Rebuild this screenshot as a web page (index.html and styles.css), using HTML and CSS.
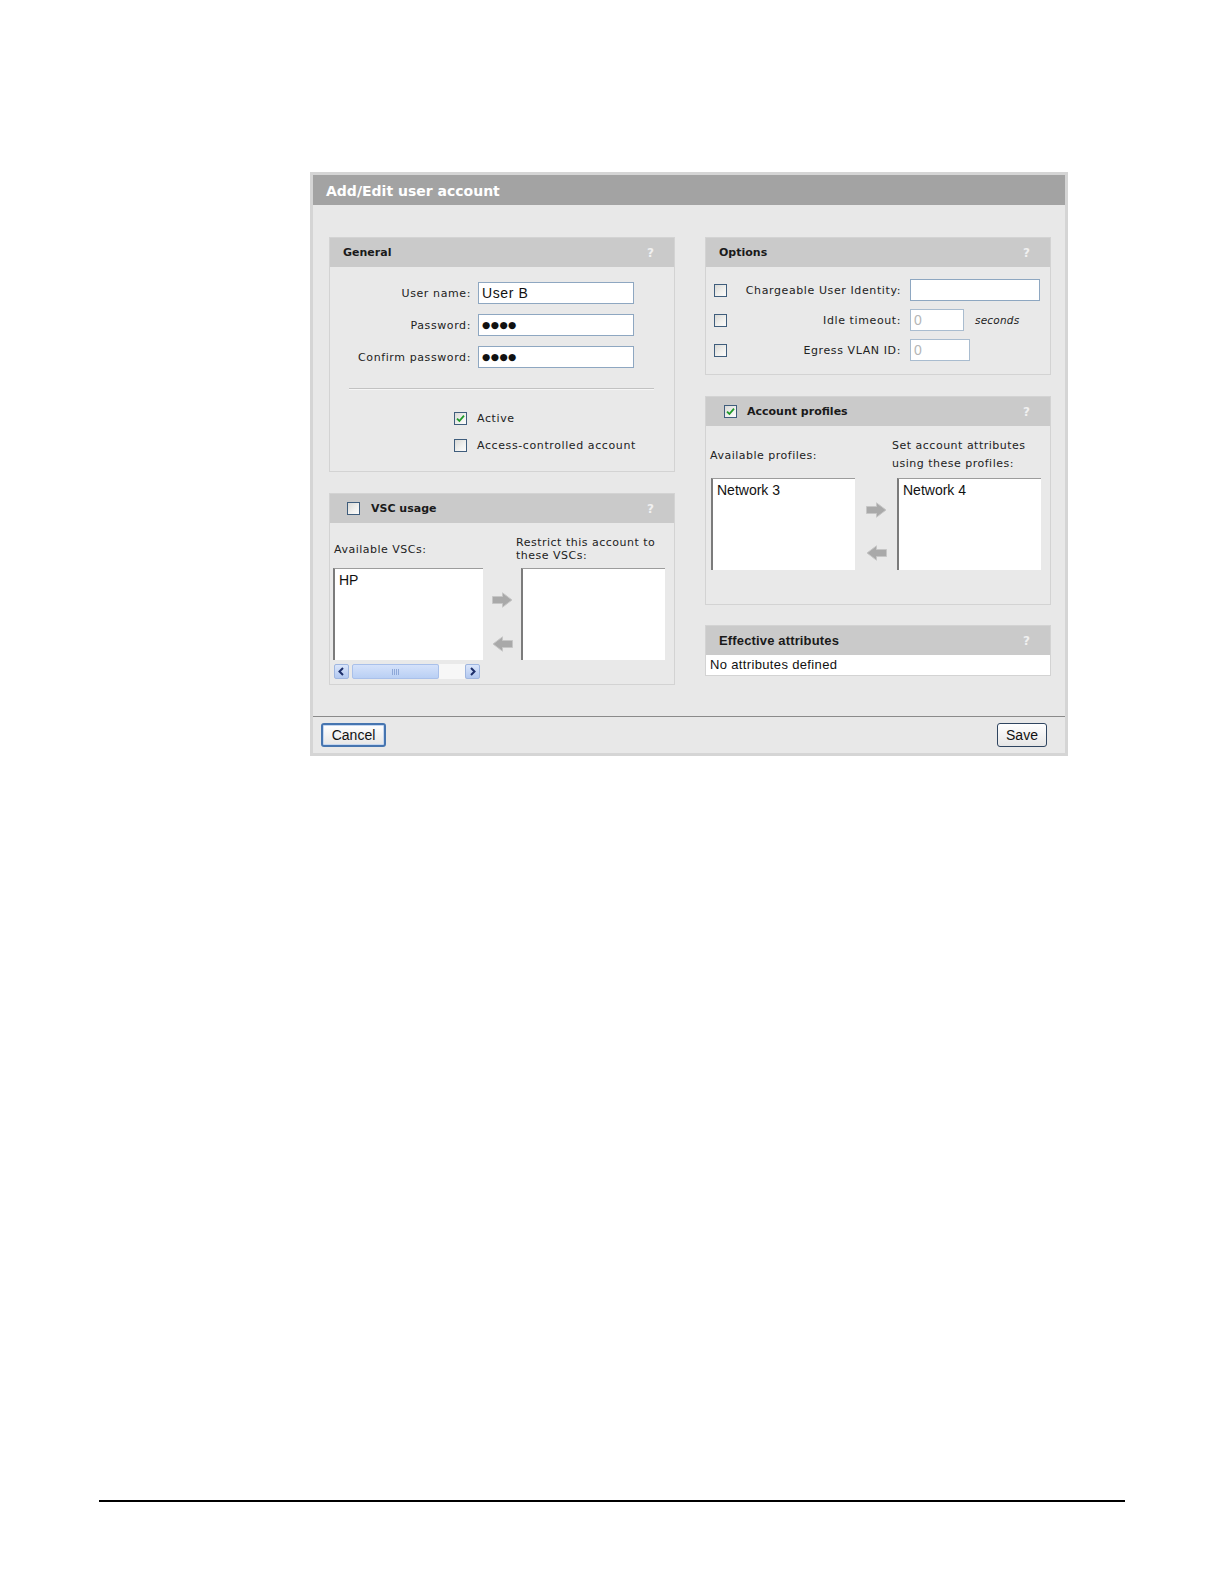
FILE: index.html
```html
<!DOCTYPE html>
<html lang="en">
<head>
<meta charset="utf-8">
<title>Add/Edit user account</title>
<link rel="stylesheet" href="styles.css">
</head>
<body>
<div class="page">
  <div class="frame">
    <div class="titlebar">Add/Edit user account</div>
    <div class="content">
      <div class="col">
        <div class="panel general">
          <div class="panel-head"><span>General</span><span class="help">?</span></div>
          <div class="general-body">
            <div class="fields">
              <label class="flabel">User name:</label>
              <div class="input text">User B</div>
              <label class="flabel">Password:</label>
              <div class="input pwd">●●●●</div>
              <label class="flabel">Confirm password:</label>
              <div class="input pwd">●●●●</div>
            </div>
            <div class="sep"></div>
            <div class="checks">
              <div class="check-row"><span class="cb checked"><svg viewBox="0 0 11 11" width="11" height="11"><path d="M2 5.6 L4.4 8 L9 2.6" fill="none" stroke="#1f9a2a" stroke-width="1.8"/></svg></span><span>Active</span></div>
              <div class="check-row"><span class="cb"></span><span>Access-controlled account</span></div>
            </div>
          </div>
        </div>

        <div class="panel vsc">
          <div class="panel-head"><span class="head-title"><span class="cb"></span><span>VSC usage</span></span><span class="help">?</span></div>
          <div class="vsc-body">
            <div class="lbl lbl-left">Available VSCs:</div>
            <div class="lbl lbl-right tight">Restrict this account to<br>these VSCs:</div>
            <div class="left-stack">
              <div class="listbox"><div class="item">HP</div></div>
              <div class="scrollbar">
                <span class="sb-btn"><svg viewBox="0 0 13 13" width="13" height="13"><path d="M8 3 L4.5 6.5 L8 10" fill="none" stroke="#1d2f6b" stroke-width="2"/></svg></span>
                <span class="sb-thumb"><span class="grip"></span></span>
                <span class="sb-track"></span>
                <span class="sb-btn"><svg viewBox="0 0 13 13" width="13" height="13"><path d="M5 3 L8.5 6.5 L5 10" fill="none" stroke="#1d2f6b" stroke-width="2"/></svg></span>
              </div>
            </div>
            <div class="arrows">
              <svg class="arrow" viewBox="0 0 21 16" width="21" height="16"><path d="M0.5 4.5 H10.5 V0.8 L20 8 L10.5 15.2 V11.5 H0.5 Z" fill="#a9a9a9" stroke="#c6c6c6" stroke-width="1"/></svg>
              <svg class="arrow" viewBox="0 0 21 16" width="21" height="16"><path d="M20.5 4.5 H10.5 V0.8 L1 8 L10.5 15.2 V11.5 H20.5 Z" fill="#a9a9a9" stroke="#c6c6c6" stroke-width="1"/></svg>
            </div>
            <div class="listbox"></div>
          </div>
        </div>
      </div>

      <div class="col right">
        <div class="panel options">
          <div class="panel-head"><span>Options</span><span class="help">?</span></div>
          <div class="options-body">
            <div class="opt-row">
              <span class="cb"></span>
              <label class="olabel">Chargeable User Identity:</label>
              <div class="field"><div class="input w-cui"></div></div>
            </div>
            <div class="opt-row">
              <span class="cb"></span>
              <label class="olabel">Idle timeout:</label>
              <div class="field"><div class="input disabled w-idle">0</div><span class="suffix">seconds</span></div>
            </div>
            <div class="opt-row">
              <span class="cb"></span>
              <label class="olabel">Egress VLAN ID:</label>
              <div class="field"><div class="input disabled w-vlan">0</div></div>
            </div>
          </div>
        </div>

        <div class="panel profiles">
          <div class="panel-head"><span class="head-title"><span class="cb checked"><svg viewBox="0 0 11 11" width="11" height="11"><path d="M2 5.6 L4.4 8 L9 2.6" fill="none" stroke="#1f9a2a" stroke-width="1.8"/></svg></span><span>Account profiles</span></span><span class="help">?</span></div>
          <div class="profiles-body">
            <div class="lbl lbl-left">Available profiles:</div>
            <div class="lbl lbl-right loose">Set account attributes<br>using these profiles:</div>
            <div class="listbox"><div class="item">Network 3</div></div>
            <div class="arrows tight-gap">
              <svg class="arrow" viewBox="0 0 21 16" width="21" height="16"><path d="M0.5 4.5 H10.5 V0.8 L20 8 L10.5 15.2 V11.5 H0.5 Z" fill="#a9a9a9" stroke="#c6c6c6" stroke-width="1"/></svg>
              <svg class="arrow" viewBox="0 0 21 16" width="21" height="16"><path d="M20.5 4.5 H10.5 V0.8 L1 8 L10.5 15.2 V11.5 H20.5 Z" fill="#a9a9a9" stroke="#c6c6c6" stroke-width="1"/></svg>
            </div>
            <div class="listbox"><div class="item">Network 4</div></div>
          </div>
        </div>

        <div class="panel effective">
          <div class="panel-head alt"><span>Effective attributes</span><span class="help">?</span></div>
          <div class="effective-body">No attributes defined</div>
        </div>
      </div>
    </div>
    <div class="footer">
      <button class="btn cancel" type="button">Cancel</button>
      <button class="btn save" type="button">Save</button>
    </div>
  </div>
</div>
<div class="rule"></div>
</body>
</html>
```

FILE: styles.css
```css
* { box-sizing: border-box; }

html, body {
  margin: 0;
  padding: 0;
  background: #ffffff;
}

body {
  width: 1224px;
  height: 1584px;
  font-family: "DejaVu Sans", Verdana, sans-serif;
  color: #222222;
}

.page {
  padding: 172px 0 0 310px;
}

.frame {
  width: 758px;
  border: 3px solid #d5d5d5;
  background: #e8e8e8;
}

.titlebar {
  height: 30px;
  background: #a3a3a3;
  color: #ffffff;
  font-weight: bold;
  font-size: 14px;
  line-height: 32px;
  padding-left: 13px;
  overflow: hidden;
}

.content {
  display: grid;
  grid-template-columns: 346px 346px;
  column-gap: 30px;
  align-items: start;
  padding: 32px 14px 31px 16px;
}

.col {
  display: flex;
  flex-direction: column;
  gap: 21px;
}

.col.right .effective {
  margin-top: -1px;
}

.panel {
  border: 1px solid #d3d3d3;
  background: #e9e9e9;
}

.panel-head {
  height: 29px;
  background: #cacaca;
  display: flex;
  align-items: center;
  justify-content: space-between;
  padding: 0 20px 0 13px;
  font-weight: bold;
  font-size: 11px;
  color: #1a1a1a;
}

.panel-head.alt {
  font-family: "Liberation Sans", Arial, sans-serif;
  font-size: 13px;
  letter-spacing: 0.15px;
}

.head-title {
  display: flex;
  align-items: center;
  gap: 11px;
}

.vsc .head-title { margin-left: 4px; }
.profiles .head-title { margin-left: 5px; gap: 10px; }

.help {
  color: #f0f0f0;
  font-size: 12px;
  font-family: "DejaVu Sans", sans-serif;
}

/* checkbox */
.cb {
  width: 13px;
  height: 13px;
  flex: 0 0 13px;
  border: 1px solid #3f5d7c;
  background: linear-gradient(135deg, #d9d9d6 0%, #f1f1ef 60%, #fbfbfb 100%);
  display: inline-flex;
  align-items: center;
  justify-content: center;
}

/* inputs */
.input {
  height: 22px;
  border: 1px solid #8ea7c1;
  background: #ffffff;
  font-family: "Liberation Sans", Arial, sans-serif;
  font-size: 14px;
  line-height: 20px;
  padding: 0 3px;
  color: #111111;
}

.input.pwd {
  font-family: "DejaVu Sans", sans-serif;
  font-size: 9.5px;
  letter-spacing: 0.4px;
  padding-left: 3px;
}

.input.disabled {
  color: #b6b6b6;
  border-color: #a9bccf;
}

/* General */
.general-body {
  padding: 15px 0 19px 0;
  font-size: 11px;
  letter-spacing: 0.6px;
}

.fields {
  display: grid;
  grid-template-columns: 141px 156px;
  column-gap: 7px;
  row-gap: 10px;
  align-items: center;
}

.flabel {
  text-align: right;
}

.sep {
  margin: 20px 20px 0 19px;
  height: 2px;
  border-top: 1px solid #c2c2c2;
  border-bottom: 1px solid #f6f6f6;
}

.checks {
  margin-top: 22px;
  padding-left: 124px;
  display: flex;
  flex-direction: column;
  gap: 14px;
}

.check-row {
  display: flex;
  align-items: center;
  gap: 10px;
  height: 13px;
}

/* Lists */
.listbox {
  background: #ffffff;
  border-top: 1px solid #9c9c9c;
  border-left: 2px solid #7b7b7b;
  height: 92px;
  font-family: "Liberation Sans", Arial, sans-serif;
  font-size: 14px;
  color: #111111;
}

.item {
  padding: 3px 0 0 4px;
}

.lbl {
  font-size: 11px;
  letter-spacing: 0.5px;
  align-self: center;
}

.tight { line-height: 13px; }
.loose { line-height: 18px; }

.arrows {
  display: flex;
  flex-direction: column;
  align-items: center;
  gap: 28px;
  padding-top: 24px;
}

.arrows.tight-gap { gap: 27px; }

/* VSC */
.vsc-body {
  display: grid;
  grid-template-columns: 150px 38px 144px;
  row-gap: 6px;
  padding: 13px 0 5px 3px;
}

.vsc-body .lbl-left { padding-left: 1px; }
.vsc-body .lbl-right { grid-column: 2 / 4; padding-left: 33px; }

.left-stack {
  display: flex;
  flex-direction: column;
  gap: 4px;
}

.scrollbar {
  display: flex;
  height: 15px;
  margin-left: 1px;
  margin-right: 3px;
}

.sb-btn {
  width: 15px;
  height: 15px;
  border: 1px solid #9fb6e0;
  background: linear-gradient(#dbe6fb, #b2c8f0);
  border-radius: 2px;
  display: inline-flex;
  align-items: center;
  justify-content: center;
}

.sb-thumb {
  width: 87px;
  margin-left: 3px;
  height: 15px;
  border: 1px solid #a9c0ea;
  border-radius: 2px;
  background: linear-gradient(#d5e2fa, #b9cff4);
  display: flex;
  align-items: center;
  justify-content: center;
}

.grip {
  width: 7px;
  height: 6px;
  background: repeating-linear-gradient(90deg, #8ea8d8 0 1px, transparent 1px 2px);
}

.sb-track {
  flex: 1;
  background: #f7f7f7;
}

/* Options */
.options-body {
  padding: 12px 10px 13px 8px;
  display: flex;
  flex-direction: column;
  gap: 8px;
  font-size: 11px;
  letter-spacing: 0.6px;
}

.opt-row {
  display: grid;
  grid-template-columns: 13px 1fr 130px;
  column-gap: 9px;
  align-items: center;
}

.olabel {
  text-align: right;
}

.field {
  display: flex;
  align-items: center;
}

.w-cui { width: 130px; }
.w-idle { width: 54px; }
.w-vlan { width: 60px; }

.suffix {
  margin-left: 11px;
  font-style: italic;
  font-size: 10.5px;
  letter-spacing: 0.2px;
}

/* Account profiles */
.profiles-body {
  display: grid;
  grid-template-columns: 144px 42px 144px;
  row-gap: 5px;
  padding: 11px 0 34px 5px;
}

.profiles-body .lbl-left { margin-left: -1px; }
.profiles-body .lbl-right { grid-column: 2 / 4; padding-left: 37px; }

/* Effective */
.effective-body {
  background: #ffffff;
  height: 20px;
  line-height: 20px;
  padding-left: 4px;
  font-family: "Liberation Sans", Arial, sans-serif;
  font-size: 13px;
  letter-spacing: 0.35px;
  color: #111111;
}

/* Footer */
.footer {
  border-top: 1px solid #8a8a8a;
  display: flex;
  justify-content: space-between;
  align-items: center;
  padding: 6px 18px 6px 8px;
}

.btn {
  height: 24px;
  font-family: "Liberation Sans", Arial, sans-serif;
  font-size: 14px;
  color: #111111;
  border-radius: 3px;
  background: linear-gradient(#ffffff, #e6e6e6);
  padding: 0;
}

.cancel {
  width: 65px;
  border: 2px solid #4675b0;
  box-shadow: inset 0 0 0 1px #c4d6f0;
}

.save {
  width: 50px;
  border: 1px solid #2f4560;
}

.rule {
  margin: 744px 0 0 99px;
  width: 1026px;
  height: 2px;
  background: #000000;
}
```
